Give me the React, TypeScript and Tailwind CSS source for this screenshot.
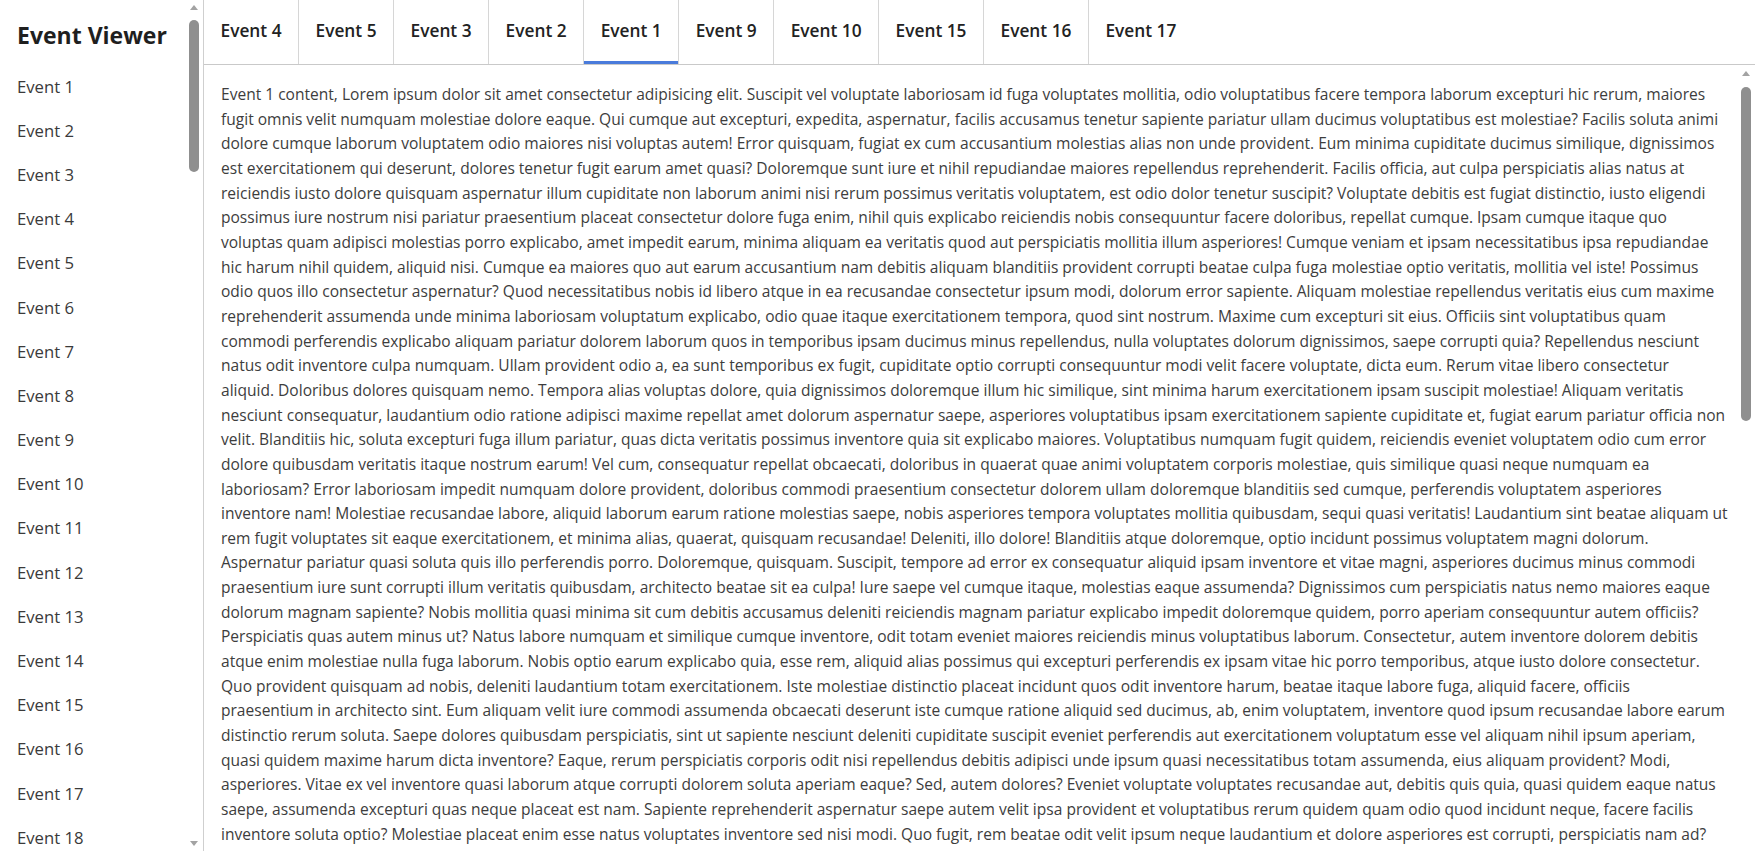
const sidebarEvents = Array.from({ length: 18 }, (_, i) => `Event ${i + 1}`);

const openTabs = ["Event 4", "Event 5", "Event 3", "Event 2", "Event 1", "Event 9", "Event 10", "Event 15", "Event 16", "Event 17"];
const activeTab = "Event 1";

// the body text keeps the wrap points of the original window
const contentLines = [
  "Event 1 content, Lorem ipsum dolor sit amet consectetur adipisicing elit. Suscipit vel voluptate laboriosam id fuga voluptates mollitia, odio voluptatibus facere tempora laborum excepturi hic rerum, maiores",
  "fugit omnis velit numquam molestiae dolore eaque. Qui cumque aut excepturi, expedita, aspernatur, facilis accusamus tenetur sapiente pariatur ullam ducimus voluptatibus est molestiae? Facilis soluta animi",
  "dolore cumque laborum voluptatem odio maiores nisi voluptas autem! Error quisquam, fugiat ex cum accusantium molestias alias non unde provident. Eum minima cupiditate ducimus similique, dignissimos",
  "est exercitationem qui deserunt, dolores tenetur fugit earum amet quasi? Doloremque sunt iure et nihil repudiandae maiores repellendus reprehenderit. Facilis officia, aut culpa perspiciatis alias natus at",
  "reiciendis iusto dolore quisquam aspernatur illum cupiditate non laborum animi nisi rerum possimus veritatis voluptatem, est odio dolor tenetur suscipit? Voluptate debitis est fugiat distinctio, iusto eligendi",
  "possimus iure nostrum nisi pariatur praesentium placeat consectetur dolore fuga enim, nihil quis explicabo reiciendis nobis consequuntur facere doloribus, repellat cumque. Ipsam cumque itaque quo",
  "voluptas quam adipisci molestias porro explicabo, amet impedit earum, minima aliquam ea veritatis quod aut perspiciatis mollitia illum asperiores! Cumque veniam et ipsam necessitatibus ipsa repudiandae",
  "hic harum nihil quidem, aliquid nisi. Cumque ea maiores quo aut earum accusantium nam debitis aliquam blanditiis provident corrupti beatae culpa fuga molestiae optio veritatis, mollitia vel iste! Possimus",
  "odio quos illo consectetur aspernatur? Quod necessitatibus nobis id libero atque in ea recusandae consectetur ipsum modi, dolorum error sapiente. Aliquam molestiae repellendus veritatis eius cum maxime",
  "reprehenderit assumenda unde minima laboriosam voluptatum explicabo, odio quae itaque exercitationem tempora, quod sint nostrum. Maxime cum excepturi sit eius. Officiis sint voluptatibus quam",
  "commodi perferendis explicabo aliquam pariatur dolorem laborum quos in temporibus ipsam ducimus minus repellendus, nulla voluptates dolorum dignissimos, saepe corrupti quia? Repellendus nesciunt",
  "natus odit inventore culpa numquam. Ullam provident odio a, ea sunt temporibus ex fugit, cupiditate optio corrupti consequuntur modi velit facere voluptate, dicta eum. Rerum vitae libero consectetur",
  "aliquid. Doloribus dolores quisquam nemo. Tempora alias voluptas dolore, quia dignissimos doloremque illum hic similique, sint minima harum exercitationem ipsam suscipit molestiae! Aliquam veritatis",
  "nesciunt consequatur, laudantium odio ratione adipisci maxime repellat amet dolorum aspernatur saepe, asperiores voluptatibus ipsam exercitationem sapiente cupiditate et, fugiat earum pariatur officia non",
  "velit. Blanditiis hic, soluta excepturi fuga illum pariatur, quas dicta veritatis possimus inventore quia sit explicabo maiores. Voluptatibus numquam fugit quidem, reiciendis eveniet voluptatem odio cum error",
  "dolore quibusdam veritatis itaque nostrum earum! Vel cum, consequatur repellat obcaecati, doloribus in quaerat quae animi voluptatem corporis molestiae, quis similique quasi neque numquam ea",
  "laboriosam? Error laboriosam impedit numquam dolore provident, doloribus commodi praesentium consectetur dolorem ullam doloremque blanditiis sed cumque, perferendis voluptatem asperiores",
  "inventore nam! Molestiae recusandae labore, aliquid laborum earum ratione molestias saepe, nobis asperiores tempora voluptates mollitia quibusdam, sequi quasi veritatis! Laudantium sint beatae aliquam ut",
  "rem fugit voluptates sit eaque exercitationem, et minima alias, quaerat, quisquam recusandae! Deleniti, illo dolore! Blanditiis atque doloremque, optio incidunt possimus voluptatem magni dolorum.",
  "Aspernatur pariatur quasi soluta quis illo perferendis porro. Doloremque, quisquam. Suscipit, tempore ad error ex consequatur aliquid ipsam inventore et vitae magni, asperiores ducimus minus commodi",
  "praesentium iure sunt corrupti illum veritatis quibusdam, architecto beatae sit ea culpa! Iure saepe vel cumque itaque, molestias eaque assumenda? Dignissimos cum perspiciatis natus nemo maiores eaque",
  "dolorum magnam sapiente? Nobis mollitia quasi minima sit cum debitis accusamus deleniti reiciendis magnam pariatur explicabo impedit doloremque quidem, porro aperiam consequuntur autem officiis?",
  "Perspiciatis quas autem minus ut? Natus labore numquam et similique cumque inventore, odit totam eveniet maiores reiciendis minus voluptatibus laborum. Consectetur, autem inventore dolorem debitis",
  "atque enim molestiae nulla fuga laborum. Nobis optio earum explicabo quia, esse rem, aliquid alias possimus qui excepturi perferendis ex ipsam vitae hic porro temporibus, atque iusto dolore consectetur.",
  "Quo provident quisquam ad nobis, deleniti laudantium totam exercitationem. Iste molestiae distinctio placeat incidunt quos odit inventore harum, beatae itaque labore fuga, aliquid facere, officiis",
  "praesentium in architecto sint. Eum aliquam velit iure commodi assumenda obcaecati deserunt iste cumque ratione aliquid sed ducimus, ab, enim voluptatem, inventore quod ipsum recusandae labore earum",
  "distinctio rerum soluta. Saepe dolores quibusdam perspiciatis, sint ut sapiente nesciunt deleniti cupiditate suscipit eveniet perferendis aut exercitationem voluptatum esse vel aliquam nihil ipsum aperiam,",
  "quasi quidem maxime harum dicta inventore? Eaque, rerum perspiciatis corporis odit nisi repellendus debitis adipisci unde ipsum quasi necessitatibus totam assumenda, eius aliquam provident? Modi,",
  "asperiores. Vitae ex vel inventore quasi laborum atque corrupti dolorem soluta aperiam eaque? Sed, autem dolores? Eveniet voluptate voluptates recusandae aut, debitis quis quia, quasi quidem eaque natus",
  "saepe, assumenda excepturi quas neque placeat est nam. Sapiente reprehenderit aspernatur saepe autem velit ipsa provident et voluptatibus rerum quidem quam odio quod incidunt neque, facere facilis",
  "inventore soluta optio? Molestiae placeat enim esse natus voluptates inventore sed nisi modi. Quo fugit, rem beatae odit velit ipsum neque laudantium et dolore asperiores est corrupti, perspiciatis nam ad?"
];

function ArrowUp() {
  return (
    <svg width="8" height="5" viewBox="0 0 8 5" className="block">
      <path d="M4 0L8 5H0Z" fill="#a3a3a3" />
    </svg>
  );
}

function ArrowDown() {
  return (
    <svg width="8" height="5" viewBox="0 0 8 5" className="block">
      <path d="M0 0H8L4 5Z" fill="#a3a3a3" />
    </svg>
  );
}

function Sidebar() {
  return (
    <aside className="flex h-full w-[204px] shrink-0 border-r border-[#cfcfcf] bg-white">
      <div className="min-w-0 flex-1 overflow-hidden pl-[17px]">
        <h1 className="flex h-[64px] items-center pt-[7px] text-[23px] font-bold text-[#1f1f1f]">
          Event Viewer
        </h1>
        <ul>
          {sidebarEvents.map((name) => (
            <li
              key={name}
              className="flex h-[44.2px] items-center text-[16.7px] text-[#3a3a3a]"
            >
              {name}
            </li>
          ))}
        </ul>
      </div>
      <div className="flex w-[15px] shrink-0 flex-col items-start pt-[5px] pb-[5px]">
        <div className="ml-[1px] flex w-[10px] justify-center">
          <ArrowUp />
        </div>
        <div className="mt-[10px] ml-[1px] h-[152px] w-[10px] rounded-full bg-[#8f8f8f]" />
        <div className="flex-1" />
        <div className="ml-[1px] flex w-[10px] justify-center">
          <ArrowDown />
        </div>
      </div>
    </aside>
  );
}

function TabBar() {
  return (
    <nav className="flex h-[65px] shrink-0 border-b border-[#c9c9c9] bg-white">
      {openTabs.map((name, i) => {
        const active = name === activeTab;
        return (
          <button
            key={name}
            className={
              "relative flex h-full items-center px-[16.5px] text-[17.3px] font-semibold text-[#222] " +
              (i < openTabs.length - 1 ? "border-r border-[#d6d6d6]" : "")
            }
          >
            <span className="pb-[2px]">{name}</span>
            {active ? (
              <span className="absolute bottom-0 left-0 right-0 h-[3px] bg-[#4a7bdb]" />
            ) : null}
          </button>
        );
      })}
    </nav>
  );
}

function EventContent() {
  return (
    <div className="flex min-h-0 flex-1">
      <div className="min-w-0 flex-1 overflow-hidden px-[17px] pt-[17px]">
        <p className="whitespace-nowrap text-[15.55px] leading-[24.65px] text-[#3d3d3d]">
          {contentLines.map((line, i) => (
            <span key={i} className="block">
              {line}
            </span>
          ))}
        </p>
      </div>
      <div className="flex w-[17px] shrink-0 flex-col pt-[6px]">
        <div className="ml-[3px] flex w-[10px] justify-center">
          <ArrowUp />
        </div>
        <div className="mt-[11px] ml-[3px] h-[334px] w-[10px] rounded-full bg-[#8f8f8f]" />
      </div>
    </div>
  );
}

export default function App() {
  return (
    <div className="flex h-screen w-full overflow-hidden bg-white font-['Open_Sans',sans-serif]">
      <Sidebar />
      <main className="flex min-w-0 flex-1 flex-col">
        <TabBar />
        <EventContent />
      </main>
    </div>
  );
}
